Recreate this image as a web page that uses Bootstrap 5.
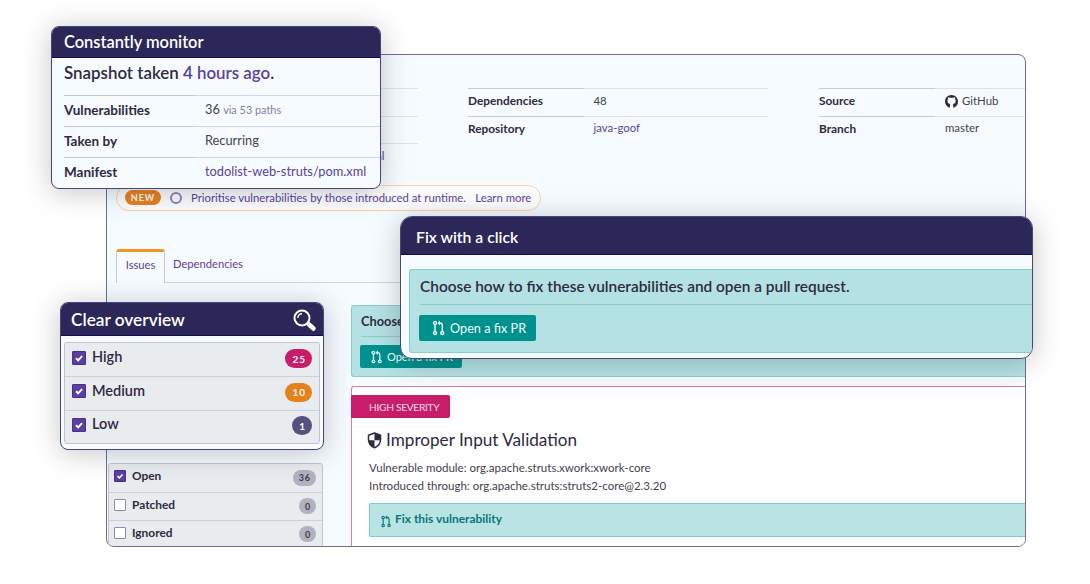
<!DOCTYPE html>
<html lang="en">
<head>
  <meta charset="UTF-8">
  <meta name="viewport" content="width=device-width, initial-scale=1">
  <title>Project overview</title>
  <link href="https://cdn.jsdelivr.net/npm/bootstrap@5.3.0/dist/css/bootstrap.min.css" rel="stylesheet">
  <style>
    :root { --navy: #2b2759; --ink: #2f2a3f; --purple: #5a3fa0; --teal: #b4e2e4; --teal-line: #8fcacb; --teal-dark: #00908d; --pink: #c81d6b; --orange: #e7811c; }
    body { font-family: Lato, "Open Sans", sans-serif; color: #44404f; font-size: 12px; line-height: 1; background: #fff; height: 584px; overflow: hidden; }
    svg { display: block; flex: none; }
    a { color: var(--purple); text-decoration: none; }
    .fw-semibold, .fw-bold { color: var(--ink); }

    /* main window */
    .window { width: 920px; height: 493px; margin: 54px 0 0 106px; border: 1px solid #716c92; border-radius: 8px; background: #f5fbff; overflow: hidden; }
    .meta { height: 130px; padding: 33px 0 0 10px; }
    .meta-block { width: 300px; margin-right: 51px; flex: none; }
    .meta-row { height: 27.6px; padding-bottom: 2px; border-top: 1px solid #dfe3e8; position: relative; font-size: 11.4px; }
    .meta-row .meta-key { width: 125.5px; font-size: 11.85px; padding-bottom: 0; }
    .meta-row span, .meta-row a { padding-bottom: 2px; }
    .meta-row::before, .snap-row::before { content: ""; position: absolute; left: 0; top: -1px; width: 116px; height: 1px; background: #c9cbd1; }
    .meta-first { width: 301px; margin-right: 50px; }
    .meta-first .meta-key { width: 124px; }
    .meta-last { width: 207px; margin-right: 0; }
    .meta-last .meta-key { width: 126px; }

    .promo { width: 425px; height: 26px; margin-left: 9px; padding: 0 0 1px 8px; border: 1px solid #fbd3a2; border-radius: 13px; background: #fbfcfd; font-size: 11.32px; }
    .tag-new { width: 36px; height: 15px; border-radius: 8px; background: var(--orange); color: #fff; font-size: 9px; font-weight: 700; letter-spacing: .9px; }
    .ring { width: 12px; height: 12px; border: 2px solid #8f7fc4; border-radius: 50%; margin: 0 9px; }
    .learn { margin-left: 9.5px; }

    .tabs { height: 34px; margin-top: 38px; padding-left: 9px; font-size: 11.2px; }
    .tab-on { width: 49px; padding-bottom: 5px; border: 1px solid #c9c8d6; border-top: 3px solid #f7941e; border-bottom: 0; border-radius: 3px 3px 0 0; }
    .tab-off { border-bottom: 1px solid #d2d3dc; padding: 0 0 3px 8px; }

    .side { width: 215px; margin: 180px 28px 0 1px; flex: none; }
    .filters { border: 1px solid #c5c3d2; border-radius: 3px; background: #e8ecef; }
    .filter-row { height: 28px; padding: 0 6px 4px 5px; color: var(--ink); font-size: 11.9px; font-weight: 700; }
    .filter-row + .filter-row { border-top: 1px solid #cfd1d9; }
    .tick { width: 12px; height: 12px; margin-right: 6px; border: 1px solid #8f88ab; border-radius: 1px; background: #fff; }
    .tick-on { background: #5b3f9f; border-color: #48308c; }
    .count { height: 16px; padding: 0 5px 0 6px; margin-top: 3px; border-radius: 9px; background: #b3b0bf; color: #3f3b52; font-size: 9px; font-weight: 700; letter-spacing: .9px; }

    .issues { margin-top: 22px; }
    .choose { border: 1px solid var(--teal-line); border-right: 0; border-radius: 3px 0 0 3px; background: var(--teal); color: var(--ink); }
    .choose-back { height: 72px; padding: 0 0 0 9px; font-size: 12.8px; }
    .choose-back .choose-title { height: 31px; }
    .choose-title { border-bottom: 1px solid var(--teal-line); white-space: nowrap; }
    .btn-fix { display: flex; align-items: center; border: 0; border-radius: 2px; background: var(--teal-dark); color: #e9ffff; }
    .btn-fix-back { width: 102px; height: 23px; margin: 8px 0 0 -1px; padding-left: 11px; font-size: 11px; gap: 5px; }
    .issue { height: 200px; margin-top: 9px; padding: 8px 0 0 17px; border: 1px solid #dd7ba3; border-right: 0; border-radius: 3px 0 0 0; background: #fff; }
    .severity { width: 99px; height: 23px; margin-left: -18px; padding: 1px 0 0 18px; background: var(--pink); color: #fbdbe9; font-size: 10.2px; letter-spacing: -.3px; border-radius: 0 2px 2px 0; }
    .issue-title { font-size: 17.15px; color: var(--ink); height: 22px; margin-top: 11px; gap: 4px; margin-left: -2px; }
    .issue-text { font-size: 11.54px; line-height: 17.5px; margin-top: 8px; }
    .fix-line { height: 34px; margin-top: 9px; padding: 0 0 2px 11px; border: 1px solid #7acbcd; border-right: 0; border-radius: 2px 0 0 2px; background: #b9e3e4; color: #0b7678; font-size: 11.95px; font-weight: 700; gap: 4px; }

    /* cards floating over the window */
    .float-card { position: absolute; border: 1px solid #4a4578; background: #f5fbff; overflow: hidden; box-shadow: 0 3px 28px rgba(40, 40, 50, .27); }
    .float-head { background: var(--navy); color: #fff; font-weight: 600; border-bottom: 1px solid #130d4e; }
    .card-monitor { left: 51px; top: 26px; width: 330px; height: 163px; border-radius: 8px; }
    .card-monitor .float-head { height: 31px; padding-left: 12px; font-size: 16.4px; }
    .snap-title { height: 37px; padding-bottom: 6px; font-size: 16.9px; }
    .snap-row { position: relative; height: 31px; border-top: 1px solid #d3d6de; padding-bottom: 2px; font-size: 12.8px; }
    .snap-row::before { width: 131px; background: #c4c6d0; }
    .snap-row .snap-key { width: 141px; padding-top: 1px; font-size: 13.5px; }
    .snap-row > :last-child { padding-bottom: 1px; }
    .snap-row small { font-size: 10.9px; color: #83809a; }

    .card-fix { left: 400px; top: 216px; width: 633px; height: 143px; border-radius: 12px; }
    .card-fix .float-head { height: 38px; padding: 2px 0 0 15px; font-size: 15.75px; }
    .choose-front { height: 84px; margin: 14px 0 0 8px; padding-left: 10px; font-size: 15.42px; }
    .choose-front .choose-title { height: 35px; }
    .btn-fix-front { width: 117px; height: 26px; margin: 10px 0 0 -1px; padding: 0 0 0 13px; font-size: 12.7px; gap: 5px; }

    .card-overview { left: 60px; top: 302px; width: 264px; height: 148px; border-radius: 8px; }
    .card-overview .float-head { height: 33px; padding: 2px 6px 0 10px; font-size: 17.25px; }
    .card-overview .filters { margin: 6px 3px 0; }
    .card-overview .filter-row { height: 33.3px; padding: 0 7px 4px; font-size: 14.5px; font-weight: 600; }
    .card-overview .tick { width: 14px; height: 14px; margin-right: 6px; }
    .card-overview .count { height: 19px; padding: 0 6px 0 7px; margin-top: 2px; border-radius: 10px; color: #fff; font-size: 10px; letter-spacing: 1px; }
  </style>
</head>
<body>
  <!-- shared glyphs -->
  <svg width="0" height="0" class="position-absolute">
    <symbol id="pr" viewBox="0 0 12 16">
      <g fill="none" stroke="currentColor" stroke-width="1.4">
        <circle cx="2.5" cy="3" r="1.5"/><circle cx="2.5" cy="13" r="1.5"/><circle cx="9.8" cy="13" r="1.5"/>
        <path d="M2.5 4.500v7M9.800 11.500V5.200Q9.800 3 7.500 3H6.500"/>
      </g>
      <path fill="currentColor" d="M7.500 .4v5.200L4.900 3z"/>
    </symbol>
    <symbol id="check" viewBox="0 0 12 12">
      <path d="M3 6.200l2.200 2.100L9 4.200" fill="none" stroke="#fff" stroke-width="1.9"/>
    </symbol>
  </svg>

  <main class="window d-flex flex-column">
    <section class="meta d-flex flex-shrink-0">
      <div class="meta-block meta-first">
        <div class="meta-row"></div>
        <div class="meta-row"></div>
        <div class="meta-row d-flex align-items-center"><span class="meta-key"></span><a href="#">todolist-web-struts/pom.xml</a></div>
      </div>
      <div class="meta-block">
        <div class="meta-row d-flex align-items-center"><span class="meta-key fw-bold">Dependencies</span><span>48</span></div>
        <div class="meta-row d-flex align-items-center"><span class="meta-key fw-bold">Repository</span><a href="#">java-goof</a></div>
      </div>
      <div class="meta-block meta-last">
        <div class="meta-row d-flex align-items-center">
          <span class="meta-key fw-bold">Source</span>
          <svg width="13" height="13" viewBox="0 0 16 16"><path fill="#2f2a3f" d="M8 0C3.580 0 0 3.580 0 8c0 3.540 2.290 6.530 5.470 7.590.4.070.55-.17.55-.38v-2.600c0-.8.3-1.300.6-1.500-1.780-.2-3.640-.89-3.640-3.950 0-.87.31-1.590.82-2.150-.08-.2-.36-1.020.08-2.120 0 0 .67-.21 2.200.82.64-.18 1.320-.27 2-.27s1.360.09 2 .27c1.530-1.040 2.200-.82 2.200-.82.44 1.100.16 1.920.08 2.120.51.56.82 1.270.82 2.150 0 3.070-1.870 3.750-3.650 3.950.29.25.54.73.54 1.480v2.620c0 .21.15.46.55.38A8.010 8.010 0 0 0 16 8c0-4.420-3.580-8-8-8z"/></svg>
          <span class="ps-1">GitHub</span>
        </div>
        <div class="meta-row d-flex align-items-center"><span class="meta-key fw-bold">Branch</span><span>master</span></div>
      </div>
    </section>

    <div class="promo d-flex align-items-center flex-shrink-0">
      <span class="tag-new d-flex align-items-center justify-content-center">NEW</span>
      <span class="ring"></span>
      <a href="#">Prioritise vulnerabilities by those introduced at runtime.</a>
      <a href="#" class="learn">Learn more</a>
    </div>

    <nav class="tabs d-flex flex-shrink-0">
      <a href="#" class="tab-on d-flex align-items-center justify-content-center">Issues</a>
      <a href="#" class="tab-off d-flex align-items-center flex-grow-1">Dependencies</a>
    </nav>

    <div class="d-flex">
      <aside class="side">
        <div class="filters">
          <div class="filter-row d-flex align-items-center"><span class="tick tick-on"><svg width="10" height="10"><use href="#check"/></svg></span>Open<span class="count d-flex align-items-center ms-auto">36</span></div>
          <div class="filter-row d-flex align-items-center"><span class="tick"></span>Patched<span class="count d-flex align-items-center ms-auto">0</span></div>
          <div class="filter-row d-flex align-items-center"><span class="tick"></span>Ignored<span class="count d-flex align-items-center ms-auto">0</span></div>
        </div>
      </aside>

      <section class="issues flex-grow-1">
        <div class="choose choose-back">
          <div class="choose-title d-flex align-items-center fw-bold">Choose</div>
          <button class="btn-fix btn-fix-back"><svg width="11" height="14"><use href="#pr"/></svg>Open a fix PR</button>
        </div>
        <article class="issue">
          <div class="severity d-flex align-items-center">HIGH SEVERITY</div>
          <div class="issue-title d-flex align-items-center">
            <svg width="15" height="17" viewBox="0 0 15 17"><path fill="#fff" stroke="#2f2a3f" stroke-width="1.5" stroke-linejoin="round" d="M7.500 1L13.500 3.200v4.300c0 4-2.500 6.800-6 8.300-3.500-1.500-6-4.300-6-8.300V3.200z"/><path fill="#2f2a3f" d="M7.500 1l6 2.200v5h-6zM7.500 8.200v7.600c-3.200-1.400-5.600-3.900-6-7.600z"/></svg>
            Improper Input Validation
          </div>
          <div class="issue-text">Vulnerable module: org.apache.struts.xwork:xwork-core<br>Introduced through: org.apache.struts:struts2-core@2.3.20</div>
          <div class="fix-line d-flex align-items-center"><svg width="10" height="13" class="mt-1"><use href="#pr"/></svg>Fix this vulnerability</div>
        </article>
      </section>
    </div>
  </main>

  <section class="float-card card-monitor">
    <div class="float-head d-flex align-items-center">Constantly monitor</div>
    <div class="ms-2 ps-1">
      <div class="snap-title d-flex align-items-center fw-semibold"><span>Snapshot taken <a href="#">4 hours ago</a>.</span></div>
      <div class="snap-row d-flex align-items-center"><span class="snap-key fw-bold">Vulnerabilities</span><span>36 <small>via 53 paths</small></span></div>
      <div class="snap-row d-flex align-items-center"><span class="snap-key fw-bold">Taken by</span><span>Recurring</span></div>
      <div class="snap-row d-flex align-items-center"><span class="snap-key fw-bold">Manifest</span><a href="#">todolist-web-struts/pom.xml</a></div>
    </div>
  </section>

  <section class="float-card card-fix">
    <div class="float-head d-flex align-items-center">Fix with a click</div>
    <div class="choose choose-front">
      <div class="choose-title d-flex align-items-center fw-semibold">Choose how to fix these vulnerabilities and open a pull request.</div>
      <button class="btn-fix btn-fix-front"><svg width="13" height="16"><use href="#pr"/></svg>Open a fix PR</button>
    </div>
  </section>

  <section class="float-card card-overview">
    <div class="float-head d-flex align-items-center justify-content-between">Clear overview
      <svg width="25" height="23" viewBox="0 0 25 23"><circle cx="10" cy="9" r="7.5" fill="none" stroke="#fff" stroke-width="2"/><path d="M5.800 9a4.200 4.200 0 0 1 4.200-4.200" fill="none" stroke="#fff" stroke-width="1.4"/><path d="M15 14l2 1.500" stroke="#fff" stroke-width="2"/><path d="M17 15.500l4.500 4" stroke="#fff" stroke-width="4.5" stroke-linecap="round"/></svg>
    </div>
    <div class="filters">
      <div class="filter-row d-flex align-items-center"><span class="tick tick-on"><svg width="12" height="12"><use href="#check"/></svg></span>High<span class="count d-flex align-items-center ms-auto" style="background: #c81d6b">25</span></div>
      <div class="filter-row d-flex align-items-center"><span class="tick tick-on"><svg width="12" height="12"><use href="#check"/></svg></span>Medium<span class="count d-flex align-items-center ms-auto" style="background: #e7811c">10</span></div>
      <div class="filter-row d-flex align-items-center"><span class="tick tick-on"><svg width="12" height="12"><use href="#check"/></svg></span>Low<span class="count d-flex align-items-center ms-auto" style="background: #56507d">1</span></div>
    </div>
  </section>

  <script src="https://cdn.jsdelivr.net/npm/bootstrap@5.3.0/dist/js/bootstrap.bundle.min.js"></script>
</body>
</html>
